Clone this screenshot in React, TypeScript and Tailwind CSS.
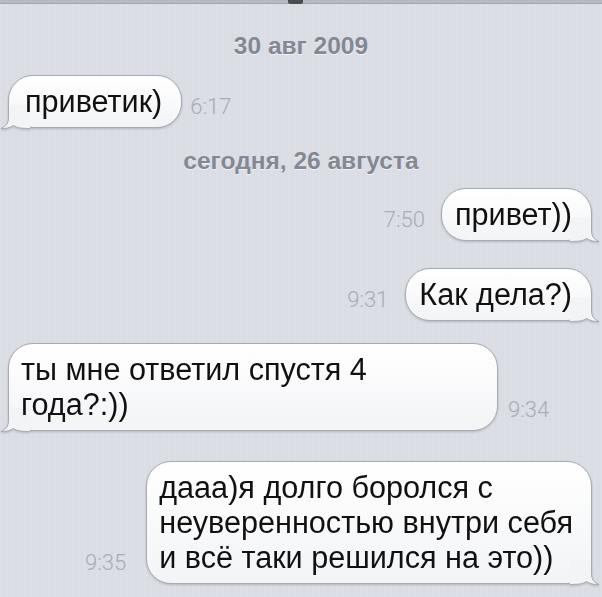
import React from "react";

type Side = "left" | "right";

const Tail = ({ side }: { side: Side }) => (
    <svg
        width="30"
        height="24"
        viewBox="0 0 30 24"
        className={side === "left" ? "absolute -left-[8px] -bottom-[1px]" : "absolute -right-[8px] -bottom-[1px] -scale-x-100"}
    >
        <path d="M8.5 0 L8.5 13 C8.5 18 6 21.5 1 23.5 C6 24 10 22.5 13.5 20.5 C17 22.8 21 23.5 30 23.5 L30 0 Z" fill="#f3f4f6" />
        <path d="M8.5 0 L8.5 13 C8.5 18 6 21.5 1 23.5 C6 24 10 22.5 13.5 20.5 C17 22.8 21 23.5 30 23.5" fill="none" stroke="#a7abb3" strokeWidth="1" />
    </svg>
);

const Bubble = ({ side, className, children }: { side: Side; className?: string; children: React.ReactNode }) => (
    <div className="relative drop-shadow-[0_1px_1px_rgba(0,0,0,0.18)]">
        <div className="absolute inset-0 rounded-[25px] border border-[#a7abb3] bg-gradient-to-b from-white to-[#f3f4f6]" />
        <Tail side={side} />
        <div className={`relative border border-transparent py-[8px] text-[30.6px] leading-[35px] text-[#111] ${className ?? ""}`}>
            {children}
        </div>
    </div>
);

const Time = ({ children }: { children: React.ReactNode }) => (
    <span className="pb-[10px] text-[22px] leading-none font-light text-[#a8acb4] font-['Roboto','Liberation_Sans',sans-serif]">
        {children}
    </span>
);

const DateLabel = ({ children, className }: { children: React.ReactNode; className?: string }) => (
    <div className={`text-center text-[24.5px] leading-[28px] font-bold text-[#838892] [text-shadow:0_1px_0_rgba(255,255,255,0.6)] ${className ?? ""}`}>
        {children}
    </div>
);

export default function App() {
    return (
        <div className="w-[602px] h-[597px] overflow-hidden bg-[#dadde4] bg-[repeating-linear-gradient(90deg,rgba(255,255,255,0.07)_0px,rgba(255,255,255,0.07)_2px,transparent_2px,transparent_6px)] font-['Liberation_Sans',Arial,sans-serif]">
            <div className="relative h-[4px] bg-[#b4b9c2] border-b border-[#a3a8b1]">
                <div className="absolute left-[288px] top-0 h-[4px] w-[15px] rounded-b-[2px] bg-[#4a4d52]" />
            </div>

            <div className="flex flex-col">
                <DateLabel className="mt-[28px]">30 авг 2009</DateLabel>

                <div className="mt-[15px] flex items-end gap-[8px] pl-[8px]">
                    <Bubble side="left" className="pl-[16px] pr-[19px]">приветик)</Bubble>
                    <Time>6:17</Time>
                </div>

                <DateLabel className="mt-[19px]">сегодня, 26 августа</DateLabel>

                <div className="mt-[13px] flex items-end justify-end gap-[16px] pr-[10px]">
                    <Time>7:50</Time>
                    <Bubble side="right" className="pl-[13px] pr-[19px]">привет))</Bubble>
                </div>

                <div className="mt-[27px] flex items-end justify-end gap-[17px] pr-[10px]">
                    <Time>9:31</Time>
                    <Bubble side="right" className="pl-[13px] pr-[19px]">Как дела?)</Bubble>
                </div>

                <div className="mt-[22px] flex items-end gap-[10px] pl-[8px]">
                    <Bubble side="left" className="w-[490px] pl-[12px] pr-[19px]">
                        ты мне ответил спустя 4<br />года?:))
                    </Bubble>
                    <Time>9:34</Time>
                </div>

                <div className="mt-[30px] flex items-end justify-end gap-[20px] pr-[10px]">
                    <Time>9:35</Time>
                    <Bubble side="right" className="pl-[12px] pr-[18px]">
                        дааа)я долго боролся с<br />неуверенностью внутри себя<br />и всё таки решился на это))
                    </Bubble>
                </div>
            </div>
        </div>
    );
}
